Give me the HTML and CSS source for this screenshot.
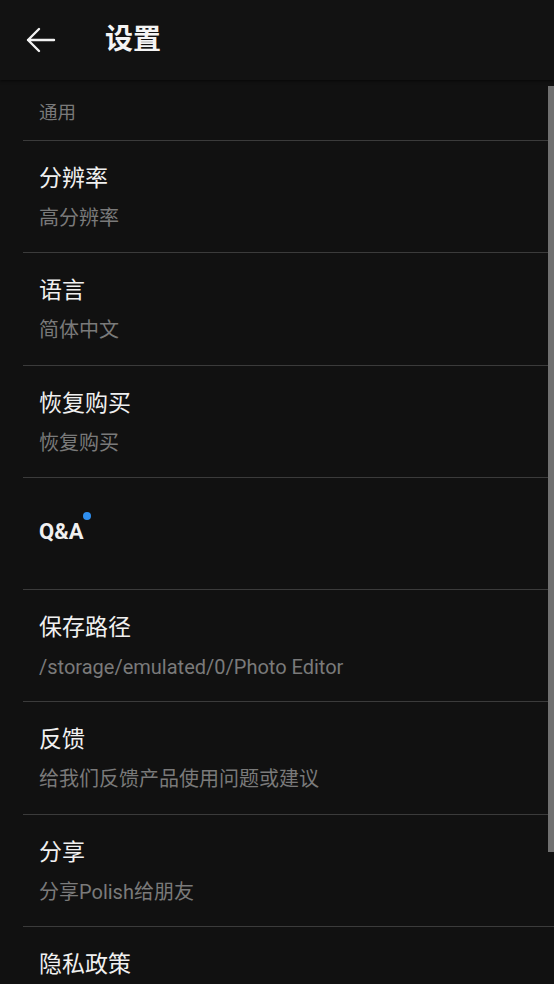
FILE: index.html
```html
<!DOCTYPE html>
<html lang="zh-CN">
<head>
<meta charset="utf-8">
<title>设置</title>
<link rel="stylesheet" href="styles.css">
</head>
<body>
<header class="appbar">
  <svg class="back" width="34" height="34" viewBox="0 0 34 34" aria-hidden="true">
    <path d="M5 17H31M5 17L16 6M5 17L16 28" fill="none" stroke="#f2f2f2" stroke-width="2.4" stroke-linecap="round" stroke-linejoin="round"/>
  </svg>
  <h1 class="title">设置</h1>
</header>
<main class="list">
  <div class="section">通用</div>
  <div class="item"><div class="item-title">分辨率</div><div class="item-sub">高分辨率</div></div>
  <div class="item"><div class="item-title">语言</div><div class="item-sub">简体中文</div></div>
  <div class="item"><div class="item-title">恢复购买</div><div class="item-sub">恢复购买</div></div>
  <div class="item item-qa"><div class="item-title qa">Q&amp;A<span class="dot"></span></div></div>
  <div class="item"><div class="item-title">保存路径</div><div class="item-sub">/storage/emulated/0/Photo Editor</div></div>
  <div class="item"><div class="item-title">反馈</div><div class="item-sub">给我们反馈产品使用问题或建议</div></div>
  <div class="item"><div class="item-title">分享</div><div class="item-sub">分享Polish给朋友</div></div>
  <div class="item item-last"><div class="item-title">隐私政策</div></div>
</main>
<div class="scrollbar"></div>
</body>
</html>
```
FILE: styles.css
```css
* { box-sizing: border-box; }
html, body {
  margin: 0;
  padding: 0;
  background: #111111;
  height: 984px;
  overflow: hidden;
  font-family: Roboto, "Noto Sans CJK SC", sans-serif;
}
.appbar {
  height: 80px;
  background: #121212;
  display: flex;
  align-items: center;
  padding-left: 23px;
  box-shadow: 0 1px 3px rgba(0,0,0,0.6);
  position: relative;
  z-index: 1;
}
.back { display: block; }
.title {
  margin: 0 0 0 48px;
  font-size: 28px;
  font-weight: 700;
  color: #f4f4f4;
  line-height: 1;
}
.list {
  margin-left: 23px;
  padding-top: 1px;
}
.section {
  height: 60px;
  border-bottom: 1px solid #3b3b3b;
  padding-left: 16px;
  padding-top: 20px;
  font-size: 18.5px;
  line-height: 24px;
  color: #7a7a7a;
}
.item {
  height: 112.3px;
  border-bottom: 1px solid #3b3b3b;
  padding: 24px 0 0 16px;
}
.item-title {
  font-size: 23px;
  line-height: 28px;
  color: #f0f0f0;
}
.item-sub {
  margin-top: 13px;
  font-size: 20px;
  line-height: 24px;
  color: #7a7a7a;
}
.item-qa { padding-top: 40px; }
.item-last { border-bottom: none; }
.qa {
  font-weight: 700;
  font-size: 22px;
  display: inline-block;
  position: relative;
}
.dot {
  position: absolute;
  right: -8px;
  top: -6px;
  width: 8px;
  height: 8px;
  border-radius: 50%;
  background: #2f8ff0;
}
.scrollbar {
  position: absolute;
  left: 548px;
  top: 86px;
  width: 6px;
  height: 766px;
  background: #707070;
}
```
